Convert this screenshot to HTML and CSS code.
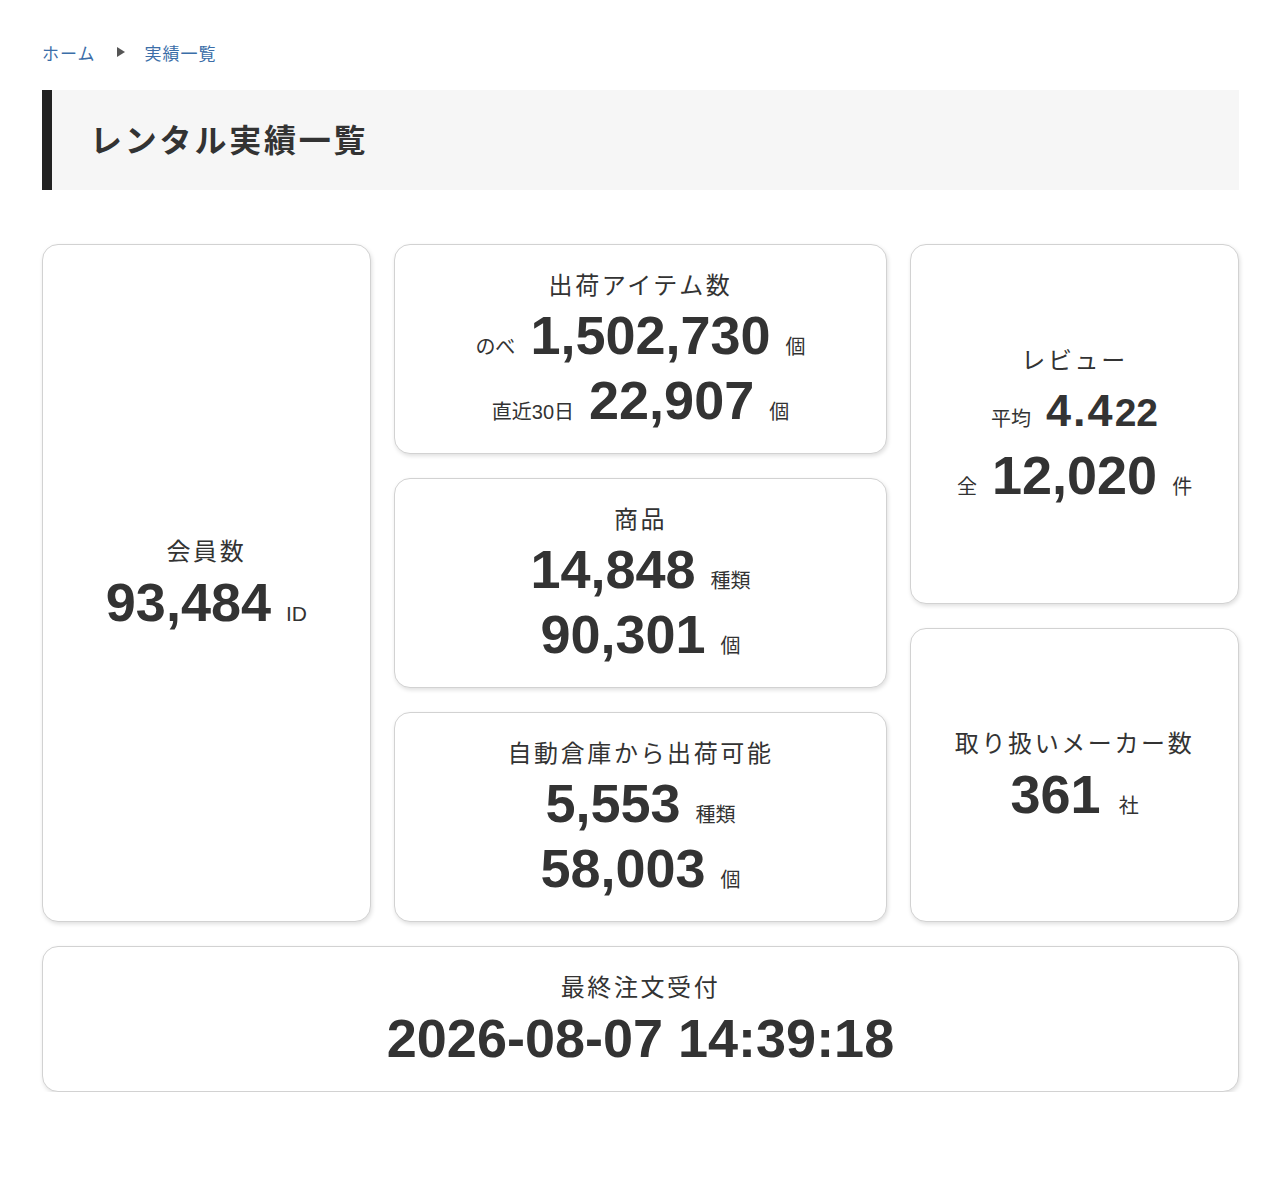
FILE: index.html
```html
<!DOCTYPE html>
<html lang="ja">
<head>
<meta charset="utf-8">
<title>レンタル実績一覧</title>
<link rel="stylesheet" href="styles.css">
</head>
<body>
<div class="page">
  <nav class="breadcrumb">
    <a class="crumb" href="#">ホーム</a>
    <span class="sep"></span>
    <a class="crumb" href="#">実績一覧</a>
  </nav>
  <h1 class="heading">レンタル実績一覧</h1>

  <div class="stats">
    <div class="card card-members">
      <p class="label">会員数</p>
      <p class="line"><span class="num">93,484</span><span class="unit unit-latin">ID</span></p>
    </div>

    <div class="col">
      <div class="card">
        <p class="label">出荷アイテム数</p>
        <p class="line"><span class="pre">のべ</span><span class="num">1,502,730</span><span class="unit">個</span></p>
        <p class="line"><span class="pre">直近30日</span><span class="num">22,907</span><span class="unit">個</span></p>
      </div>
      <div class="card">
        <p class="label">商品</p>
        <p class="line"><span class="num">14,848</span><span class="unit">種類</span></p>
        <p class="line"><span class="num">90,301</span><span class="unit">個</span></p>
      </div>
      <div class="card">
        <p class="label">自動倉庫から出荷可能</p>
        <p class="line"><span class="num">5,553</span><span class="unit">種類</span></p>
        <p class="line"><span class="num">58,003</span><span class="unit">個</span></p>
      </div>
    </div>

    <div class="col col-side">
      <div class="card card-review">
        <p class="label">レビュー</p>
        <p class="line"><span class="pre">平均</span><span class="num num-rating">4.4<span class="num-small">22</span></span></p>
        <p class="line"><span class="pre">全</span><span class="num">12,020</span><span class="unit">件</span></p>
      </div>
      <div class="card card-maker">
        <p class="label">取り扱いメーカー数</p>
        <p class="line"><span class="num">361</span><span class="unit unit-wide">社</span></p>
      </div>
    </div>
  </div>

  <div class="card card-last">
    <p class="label">最終注文受付</p>
    <p class="line"><span class="num">2026-08-07 14:39:18</span></p>
  </div>
</div>
</body>
</html>
```

FILE: styles.css
```css
* {
  box-sizing: border-box;
}

html, body {
  margin: 0;
  padding: 0;
  background: #ffffff;
}

body {
  font-family: "Liberation Sans", "Noto Sans CJK JP", sans-serif;
  color: #333333;
}

.page {
  padding: 40px 41px 0 42px;
}

.breadcrumb {
  display: flex;
  align-items: center;
  height: 24px;
  font-family: "Noto Sans CJK JP", sans-serif;
  font-size: 17px;
  letter-spacing: 1px;
}

.crumb {
  color: #3b6ea8;
  text-decoration: none;
}

.sep {
  display: inline-block;
  width: 0;
  height: 0;
  margin: 0 20px 0 21px;
  border-top: 5.5px solid transparent;
  border-bottom: 5.5px solid transparent;
  border-left: 8px solid #555555;
}

.heading {
  margin: 26px 0 54px;
  height: 100px;
  display: flex;
  align-items: center;
  padding-left: 38px;
  padding-bottom: 4px;
  background: #f6f6f6;
  border-left: 10px solid #222222;
  font-family: "Noto Sans CJK JP", sans-serif;
  font-size: 32px;
  font-weight: 700;
  letter-spacing: 2.8px;
  color: #333333;
}

.stats {
  display: grid;
  grid-template-columns: 2fr 3fr 2fr;
  column-gap: 23px;
  height: 678px;
}

.col {
  display: grid;
  grid-template-rows: 1fr 1fr 1fr;
  row-gap: 24px;
}

.col-side {
  grid-template-rows: 360px 1fr;
}

.card {
  display: flex;
  flex-direction: column;
  align-items: center;
  justify-content: center;
  background: #ffffff;
  border: 1px solid #d2d2d2;
  border-radius: 16px;
  box-shadow: 1px 2px 4px rgba(0, 0, 0, 0.13);
}

.card-last {
  margin-top: 24px;
  height: 146px;
}

.label {
  margin: 0;
  font-family: "Noto Sans CJK JP", sans-serif;
  font-size: 24px;
  line-height: 38.4px;
  letter-spacing: 2.6px;
  font-weight: 400;
  color: #333333;
}

.line {
  margin: 0;
  display: flex;
  align-items: baseline;
  justify-content: center;
  line-height: 65px;
  height: 65px;
}

.num {
  font-family: "Liberation Sans", sans-serif;
  font-size: 54px;
  font-weight: 700;
  color: #333333;
}

.num-rating {
  font-size: 45px;
  letter-spacing: 2px;
}

.num-small {
  font-size: 39px;
  letter-spacing: 0;
}

.pre,
.unit {
  font-family: "Liberation Sans", "Noto Sans CJK JP", sans-serif;
  font-size: 20px;
  color: #333333;
}

.pre {
  margin-right: 15px;
}

.unit {
  margin-left: 15px;
}

.unit-latin {
  font-size: 21px;
}

.unit-wide {
  margin-left: 18px;
}
```
